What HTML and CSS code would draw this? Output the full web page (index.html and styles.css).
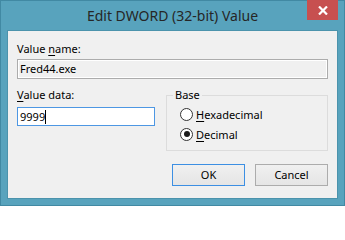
FILE: index.html
```html
<!DOCTYPE html>
<html>
<head>
<meta charset="utf-8">
<link rel="stylesheet" href="styles.css">
</head>
<body>
<div class="window">
  <div class="titlebar">
    <div class="spacer"></div>
    <div class="title">Edit DWORD (32-bit) Value</div>
    <div class="controls">
      <div class="close">
        <svg width="10" height="9" viewBox="0 0 10 9"><path d="M1 0.5 L9 8.5 M9 0.5 L1 8.5" stroke="#fff" stroke-width="2.2"/></svg>
      </div>
    </div>
  </div>
  <div class="client">
    <div class="label">Value <u>n</u>ame:</div>
    <div class="field readonly">Fred44.exe</div>
    <div class="lower">
      <div class="data-col">
        <div class="label"><u>V</u>alue data:</div>
        <div class="field edit"><span>9999</span><span class="caret"></span></div>
      </div>
      <fieldset class="group">
        <legend>Base</legend>
        <div class="radio-row"><span class="radio"></span><span><u>H</u>exadecimal</span></div>
        <div class="radio-row"><span class="radio checked"></span><span><u>D</u>ecimal</span></div>
      </fieldset>
    </div>
    <div class="buttons">
      <div class="btn default">OK</div>
      <div class="btn">Cancel</div>
    </div>
  </div>
</div>
</body>
</html>
```
FILE: styles.css
```css
html, body {
  margin: 0;
  padding: 0;
  background: #ffffff;
}
.window {
  width: 345px;
  height: 206px;
  box-sizing: border-box;
  background: #58a3bd;
  border: 1px solid #4189a3;
  display: flex;
  flex-direction: column;
  font-family: "Noto Sans", "Open Sans", sans-serif;
  font-size: 11px;
  color: #000;
}
.titlebar {
  height: 29px;
  flex: none;
  display: grid;
  grid-template-columns: 1fr auto 1fr;
}
.title {
  font-size: 14px;
  line-height: 29px;
  color: #262626;
  white-space: nowrap;
}
.controls {
  display: flex;
  justify-content: flex-end;
  align-items: flex-start;
  padding-right: 6px;
}
.close {
  width: 31px;
  height: 20px;
  margin-top: -1px;
  background: #c75050;
  display: flex;
  align-items: center;
  justify-content: center;
}
.client {
  flex: 1 1 auto;
  margin: 0 6px 6px 6px;
  background: #f0f0f0;
  border: 1px solid #4b93ac;
  padding: 10px 9px 0 9px;
  display: flex;
  flex-direction: column;
}
.label {
  line-height: 16px;
  height: 16px;
  white-space: nowrap;
}
u {
  text-decoration-thickness: 1px;
  text-underline-offset: 2px;
}
.field {
  box-sizing: border-box;
  line-height: 16px;
  white-space: nowrap;
}
.readonly {
  margin-top: 2px;
  height: 20px;
  background: #f0f0f0;
  border: 1px solid #acacac;
  box-shadow: inset 0 0 0 1px #ffffff;
  padding: 1px 2px;
}
.lower {
  margin-top: 8px;
  display: flex;
  align-items: flex-start;
  gap: 11px;
}
.data-col {
  width: 138px;
}
.edit {
  margin-top: 4px;
  height: 19px;
  background: #ffffff;
  border: 1px solid #4d97e3;
  padding: 0 2px;
  display: flex;
  align-items: center;
}
.caret {
  display: inline-block;
  width: 1px;
  height: 14px;
  background: #000;
}
.group {
  margin: 0;
  width: 162px;
  box-sizing: border-box;
  border: 1px solid #dcdcdc;
  padding: 0 6px 6px 6px;
  min-width: 0;
}
.group legend {
  padding: 0 2px;
  line-height: 16px;
}
.radio-row {
  height: 20px;
  display: flex;
  align-items: center;
  gap: 3px;
  padding-left: 7px;
}
.radio-row:first-of-type {
  margin-top: 1px;
}
.radio {
  width: 13px;
  height: 13px;
  box-sizing: border-box;
  border-radius: 50%;
  border: 1px solid #333333;
  background: #ffffff;
  display: flex;
  align-items: center;
  justify-content: center;
}
.radio.checked::after {
  content: "";
  width: 6px;
  height: 6px;
  border-radius: 50%;
  background: #1a1a1a;
}
.buttons {
  margin-top: 13px;
  display: flex;
  justify-content: flex-end;
  gap: 10px;
}
.btn {
  width: 73px;
  height: 22px;
  box-sizing: border-box;
  border: 1px solid #acacac;
  background: linear-gradient(#f0f0f0, #e5e5e5);
  text-align: center;
  line-height: 20px;
}
.btn.default {
  border-color: #3c8fe3;
}
```
